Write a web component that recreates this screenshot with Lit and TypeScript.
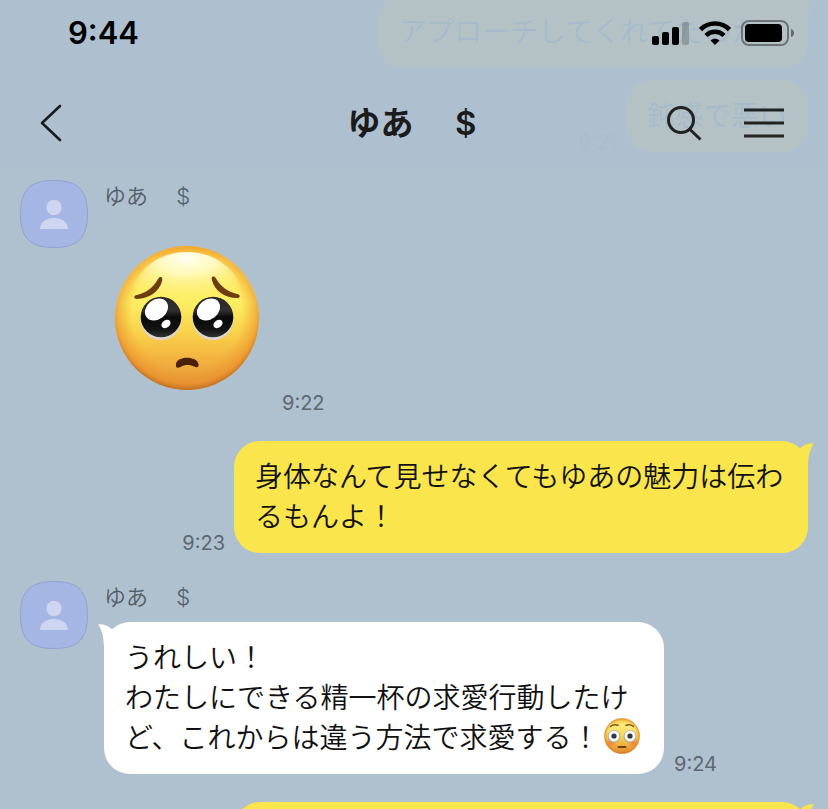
import { LitElement, html, css, svg, nothing } from "lit";
import { customElement, property } from "lit/decorators.js";

const NAME = "ゆあ\u3000 $";

@customElement("pleading-face")
class PleadingFace extends LitElement {
  static styles = css`
    :host { display: block; width: 144px; height: 144px; }
    svg { display: block; width: 100%; height: 100%; }
  `;
  render() {
    const eye = (x: number) => svg`
      <g transform="translate(${x} 0)">
        <ellipse cx="0" cy="73.500" rx="20.500" ry="20.500" fill="#dcd6cf"/>
        <circle cx="0" cy="71" r="20.300" fill="url(#eye)"/>
        <ellipse cx="-4.500" cy="63.500" rx="12.500" ry="9.800" transform="rotate(-38 -4.500 63.500)" fill="#fff"/>
        <ellipse cx="5" cy="78" rx="5" ry="3.700" transform="rotate(-35 5 78)" fill="#fff"/>
      </g>`;
    return html`<svg viewBox="0 0 144 144" role="img" aria-label="Pleading face">
      <defs>
        <linearGradient id="skin" x1="0" y1="0" x2="0" y2="1">
          <stop offset="0" stop-color="#f9c02f"/>
          <stop offset=".1" stop-color="#fde05a"/>
          <stop offset=".38" stop-color="#fdf064"/>
          <stop offset=".6" stop-color="#f9d24c"/>
          <stop offset=".8" stop-color="#f3b03f"/>
          <stop offset="1" stop-color="#e0933a"/>
        </linearGradient>
        <radialGradient id="rim" cx=".5" cy=".47" r=".54">
          <stop offset=".7" stop-color="#f09a2c" stop-opacity="0"/>
          <stop offset=".9" stop-color="#ea8d29" stop-opacity=".6"/>
          <stop offset="1" stop-color="#b05d1c" stop-opacity=".9"/>
        </radialGradient>
        <radialGradient id="shine" cx=".5" cy=".1" r=".8">
          <stop offset="0" stop-color="#fffff4"/>
          <stop offset=".35" stop-color="#fffdc8" stop-opacity=".85"/>
          <stop offset="1" stop-color="#fdf064" stop-opacity="0"/>
        </radialGradient>
        <linearGradient id="eye" x1="0" y1="0" x2="0" y2="1">
          <stop offset="0" stop-color="#2b2929"/>
          <stop offset=".35" stop-color="#302e2e"/>
          <stop offset=".5" stop-color="#0b0b0b"/>
          <stop offset=".8" stop-color="#131313"/>
          <stop offset="1" stop-color="#333"/>
        </linearGradient>
      </defs>
      <circle cx="72" cy="72" r="72" fill="url(#skin)"/>
      <circle cx="72" cy="72" r="72" fill="url(#rim)"/>
      <path d="M72 6C103 6 126 27 131 56C110 66 34 66 13 56C18 27 41 6 72 6Z" fill="url(#shine)"/>
      <path d="M45.500 31C47.500 31 47.500 33 47 35.500C44 46 34 52.500 22 53C18.500 53 18.500 50 21 49.300C31 47 38 42 43 33C44 31.500 44.500 31 45.500 31Z" fill="#6d3c10"/>
      <path d="M98.500 30.500C96.500 30.500 96.500 32.500 97 34.500C100 45 110 52 122 52C125.500 52 125.500 49 123 48.200C113 46 106 41 101 32.500C100 31 99.500 30.500 98.500 30.500Z" fill="#6d3c10"/>
      ${eye(46)}${eye(98)}
      <path d="M61 118C62 109.500 82 109.500 83.500 118C84 121.500 82 122 79 120.500C74 118.500 70 118.500 65.500 121C62 122.500 60.500 121.500 61 118Z" fill="#4b1f08"/>
    </svg>`;
  }
}

@customElement("flushed-face")
class FlushedFace extends LitElement {
  static styles = css`
    :host { display: inline-block; width: 36px; height: 36px; margin-left: 4px; vertical-align: -6px; }
    svg { display: block; width: 100%; height: 100%; }
  `;
  render() {
    const eye = (x: number) => svg`
      <circle cx="${x}" cy="18.200" r="6.300" fill="#a9a39a"/>
      <circle cx="${x}" cy="18" r="5.500" fill="#f7f8f8"/>
      <circle cx="${x}" cy="18" r="2.600" fill="#34393f"/>`;
    return html`<svg viewBox="0 0 36 36" role="img" aria-label="Flushed face">
      <defs>
        <linearGradient id="skin" x1="0" y1="0" x2="0" y2="1">
          <stop offset="0" stop-color="#f9c63c"/>
          <stop offset=".2" stop-color="#fdec7c"/>
          <stop offset=".55" stop-color="#f9d04c"/>
          <stop offset="1" stop-color="#e0862f"/>
        </linearGradient>
        <radialGradient id="rim">
          <stop offset=".8" stop-color="#e8912c" stop-opacity="0"/>
          <stop offset="1" stop-color="#cf7526" stop-opacity=".7"/>
        </radialGradient>
        <radialGradient id="blush">
          <stop offset="0" stop-color="#ee6a3c" stop-opacity=".7"/>
          <stop offset="1" stop-color="#ee6a3c" stop-opacity="0"/>
        </radialGradient>
      </defs>
      <circle cx="18" cy="18" r="17.800" fill="url(#skin)"/>
      <circle cx="18" cy="18" r="17.800" fill="url(#rim)"/>
      <ellipse cx="6.500" cy="25" rx="6" ry="5" fill="url(#blush)"/>
      <ellipse cx="29.500" cy="25" rx="6" ry="5" fill="url(#blush)"/>
      ${eye(10)}${eye(26)}
      <path d="M6.500 8.500Q9.500 6 14 7.300M29.500 8.500Q26.500 6 22 7.300" fill="none" stroke="#80501c" stroke-width="1.500" stroke-linecap="round"/>
      <path d="M14.500 29h7" stroke="#74400f" stroke-width="2" stroke-linecap="round"/>
    </svg>`;
  }
}

@customElement("user-avatar")
class UserAvatar extends LitElement {
  static styles = css`
    :host { display: block; flex: none; width: 68px; height: 68px; }
    svg { display: block; width: 100%; height: 100%; }
  `;
  render() {
    return html`<svg viewBox="0 0 68 68" aria-hidden="true">
      <path d="M34 .5C58 .5 67.500 10 67.500 34S58 67.500 34 67.500 .5 58 .5 34 10 .5 34 .5Z" fill="#a5b5e4" stroke="#91a2d0"/>
      <circle cx="34" cy="27.500" r="7.700" fill="#cdd5f0"/>
      <path d="M20 49C20 42 26 38 34 38S48 42 48 49Z" fill="#cdd5f0"/>
    </svg>`;
  }
}

@customElement("chat-bubble")
class ChatBubble extends LitElement {
  @property({ reflect: true }) side: "mine" | "theirs" = "mine";
  @property({ type: Boolean }) tail = false;
  static styles = css`
    :host {
      display: block; position: relative; box-sizing: border-box; min-width: 0;
      max-width: 574px; min-height: 72px; padding: 16px 21px; border-radius: 26px;
      font-size: 28px; line-height: 40px; font-weight: 350; color: var(--ink, #111);
      background: #fae54d;
    }
    :host([side="theirs"]) { background: #fff; max-width: 560px; }
    svg { position: absolute; top: 0; right: -7px; width: 30px; height: 30px; fill: #fae54d; }
    :host([side="theirs"]) svg { right: auto; left: -7px; transform: scaleX(-1); fill: #fff; }
  `;
  render() {
    return html`${this.tail
      ? html`<svg viewBox="0 0 30 30" aria-hidden="true"><path d="M8 14L15.500 7C18.500 4 23 2 29 2.200C25.500 7 23.400 13 23 25L15 28Z"/></svg>`
      : nothing}<slot></slot>`;
  }
}

@customElement("app-root")
class AppRoot extends LitElement {
  static styles = css`
    :host {
      display: block; position: relative; height: 100vh; overflow: hidden;
      background: #afc0cf; color: #1b1b1b;
      font-family: Inter, "Noto Sans CJK JP", sans-serif;
    }
    header {
      position: absolute; inset: 0 0 auto; z-index: 1; height: 168px;
      background: rgba(174, 191, 208, 0.93);
    }
    .status {
      display: flex; justify-content: space-between; align-items: center;
      height: 66px; padding: 0 33px 0 68px; color: #000;
    }
    .clock { font-size: 31px; line-height: 40px; font-weight: 600; }
    .signals { display: flex; align-items: center; gap: 10px; }
    .nav {
      display: grid; grid-template-columns: 1fr auto 1fr; align-items: center;
      height: 114px; padding: 0 44px 0 40px;
    }
    h1 { margin: 0; font-size: 33px; line-height: 40px; font-weight: 600; white-space: pre; }
    button { border: 0; padding: 0; background: none; color: inherit; display: block; }
    button svg, .signals svg { display: block; }
    .back { justify-self: start; }
    .tools { display: flex; align-items: center; justify-self: end; gap: 42px; }
    main { display: flex; flex-direction: column; gap: 28px; margin-top: -4px; }
    .run { display: flex; flex-direction: column; gap: 12px; }
    .past { --ink: #4a73a0; }
    .row { display: flex; align-items: flex-end; gap: 9px; padding: 0 20px; }
    .mine { justify-content: flex-end; }
    .theirs { align-items: flex-start; gap: 16px; }
    .body { display: flex; flex-direction: column; gap: 9px; min-width: 0; }
    .name { font-size: 22px; line-height: 32px; font-weight: 350; color: #545e67; white-space: pre; }
    .line { display: flex; align-items: flex-end; gap: 10px; }
    .sticker { padding: 25px 13px 23px 11px; }
    time { flex: none; font-size: 20px; line-height: 20px; color: #5d6770; }
    .past time { color: #7088a5; }
    .next { flex: 0 1 574px; }
  `;

  private indicators() {
    return html`
      <svg width="37" height="24" viewBox="0 0 37 24" aria-hidden="true">
        <rect x="0" y="15" width="7" height="9" rx="2"/>
        <rect x="10" y="11" width="7" height="13" rx="2"/>
        <rect x="20" y="6" width="7" height="18" rx="2"/>
        <rect x="30" y="1" width="7" height="23" rx="2" opacity=".2"/>
      </svg>
      <svg width="32" height="24" viewBox="0 0 32 24" aria-hidden="true">
        <path d="M1.500 8.500C9.500 .5 22.500 .5 30.500 8.500" fill="none" stroke="#000" stroke-width="4.600"/>
        <path d="M7 14.500C12 9.500 20 9.500 25 14.500" fill="none" stroke="#000" stroke-width="4.400"/>
        <path d="M16 24L11.500 19.500C14 17 18 17 20.500 19.500Z"/>
      </svg>
      <svg width="54" height="26" viewBox="0 0 54 26" aria-hidden="true">
        <rect x="1" y="1" width="46" height="24" rx="7" fill="none" stroke="#000" stroke-opacity=".4" stroke-width="2"/>
        <rect x="4" y="4" width="37" height="18" rx="4"/>
        <path d="M50 9C54 10 54 16 50 17Z" opacity=".45"/>
      </svg>`;
  }

  render() {
    return html`
      <header>
        <div class="status">
          <span class="clock">9:44</span>
          <div class="signals">${this.indicators()}</div>
        </div>
        <nav class="nav">
          <button class="back" aria-label="Back">
            <svg width="22" height="38" viewBox="0 0 22 38" fill="none" stroke="#1b1b1b" stroke-width="2.600" stroke-linecap="round" stroke-linejoin="round"><path d="M20 2L2 19L20 36"/></svg>
          </button>
          <h1>${NAME}</h1>
          <div class="tools">
            <button aria-label="Search">
              <svg width="36" height="36" viewBox="0 0 36 36" fill="none" stroke="#222" stroke-width="3"><circle cx="15" cy="15" r="12.500"/><path d="M23.500 24L34.500 34.500"/></svg>
            </button>
            <button aria-label="Menu">
              <svg width="40" height="30" viewBox="0 0 40 30" stroke="#222" stroke-width="3"><path d="M0 2H40M0 15H40M0 28H40"/></svg>
            </button>
          </div>
        </nav>
      </header>
      <main>
        <section class="run past">
          <div class="row mine"><chat-bubble tail>アプローチしてくれてたのか、</chat-bubble></div>
          <div class="row mine"><time>9:21</time><chat-bubble>鈍感で悪い</chat-bubble></div>
        </section>
        <section class="row theirs">
          <user-avatar></user-avatar>
          <div class="body">
            <span class="name">${NAME}</span>
            <div class="line"><pleading-face class="sticker"></pleading-face><time>9:22</time></div>
          </div>
        </section>
        <section class="row mine">
          <time>9:23</time>
          <chat-bubble tail>身体なんて見せなくてもゆあの魅力は伝わるもんよ！</chat-bubble>
        </section>
        <section class="row theirs">
          <user-avatar></user-avatar>
          <div class="body">
            <span class="name">${NAME}</span>
            <div class="line">
              <chat-bubble side="theirs" tail>うれしい！<br>わたしにできる精一杯の求愛行動したけど、これからは違う方法で求愛する！<flushed-face></flushed-face></chat-bubble>
              <time>9:24</time>
            </div>
          </div>
        </section>
        <section class="row mine"><chat-bubble class="next" tail></chat-bubble></section>
      </main>`;
  }
}
